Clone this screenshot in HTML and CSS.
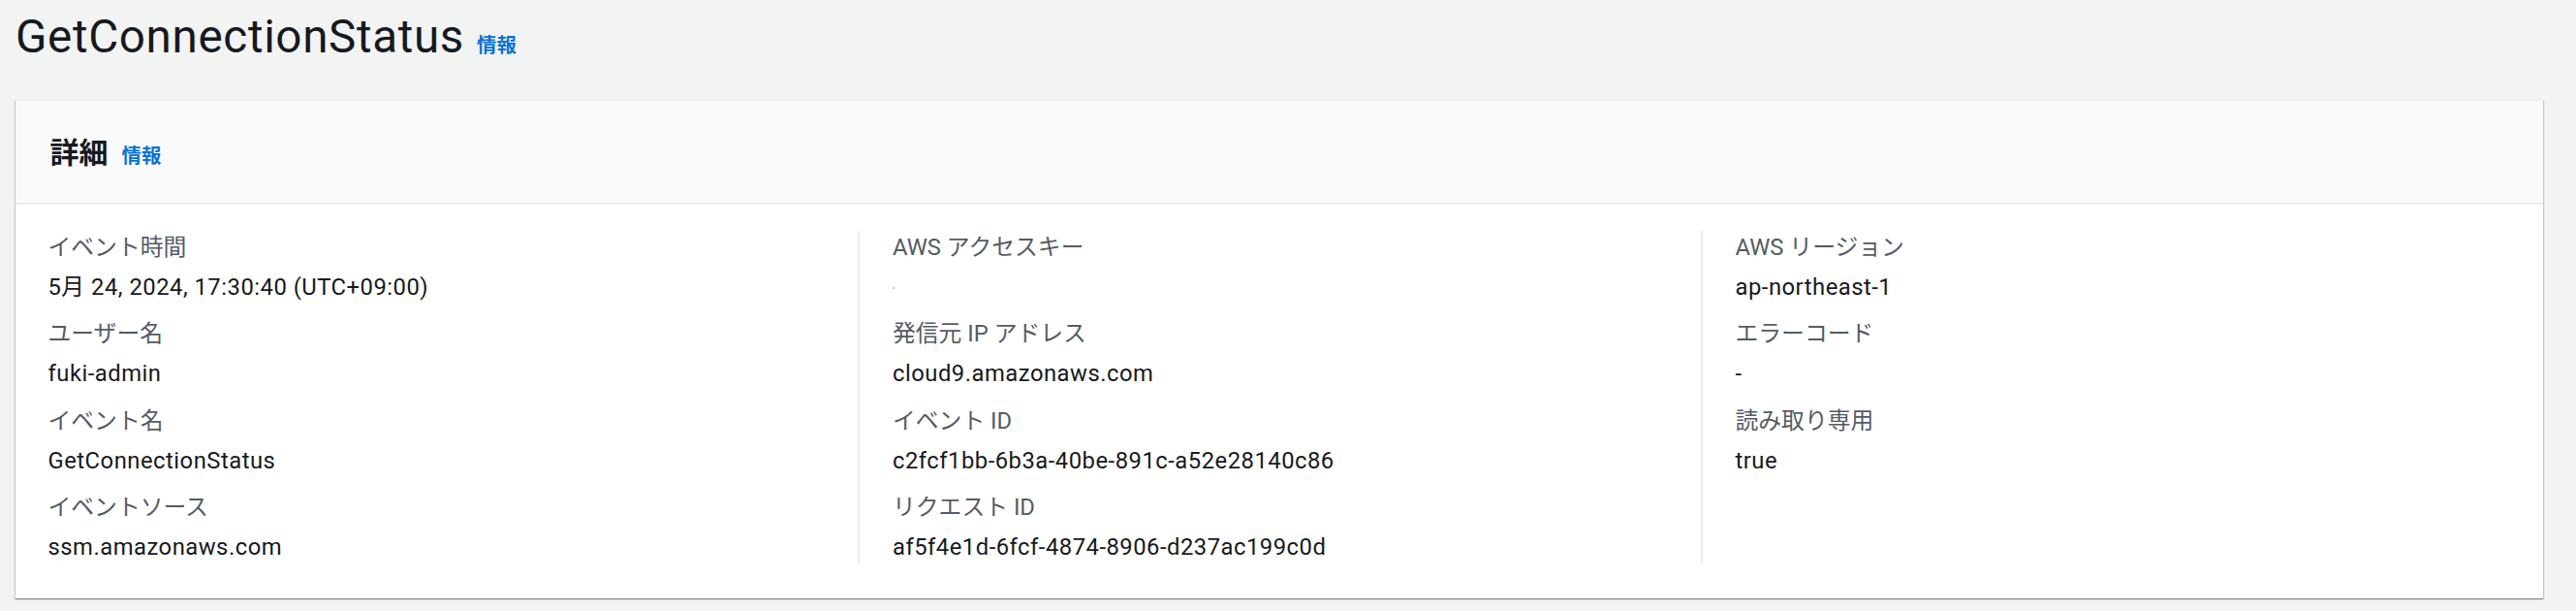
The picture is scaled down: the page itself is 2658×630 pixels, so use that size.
FILE: index.html
```html
<!DOCTYPE html>
<html lang="ja">
<head>
<meta charset="utf-8">
<title>GetConnectionStatus</title>
<link rel="stylesheet" href="styles.css">
</head>
<body>
<header class="page-header">
  <h1 class="page-title">GetConnectionStatus</h1>
  <a class="info-link info-link-title" href="#">情報</a>
</header>
<section class="panel">
  <div class="panel-header">
    <h2 class="panel-title">詳細</h2>
    <a class="info-link info-link-panel" href="#">情報</a>
  </div>
  <div class="panel-body">
    <div class="column">
      <div class="item"><div class="key">イベント時間</div><div class="value">5月 24, 2024, 17:30:40 (UTC+09:00)</div></div>
      <div class="item"><div class="key">ユーザー名</div><div class="value">fuki-admin</div></div>
      <div class="item"><div class="key">イベント名</div><div class="value">GetConnectionStatus</div></div>
      <div class="item"><div class="key">イベントソース</div><div class="value">ssm.amazonaws.com</div></div>
    </div>
    <div class="column">
      <div class="item"><div class="key">AWS アクセスキー</div><div class="value"><span class="redacted"></span></div></div>
      <div class="item"><div class="key">発信元 IP アドレス</div><div class="value">cloud9.amazonaws.com</div></div>
      <div class="item"><div class="key">イベント ID</div><div class="value">c2fcf1bb-6b3a-40be-891c-a52e28140c86</div></div>
      <div class="item"><div class="key">リクエスト ID</div><div class="value">af5f4e1d-6fcf-4874-8906-d237ac199c0d</div></div>
    </div>
    <div class="column">
      <div class="item"><div class="key">AWS リージョン</div><div class="value">ap-northeast-1</div></div>
      <div class="item"><div class="key">エラーコード</div><div class="value">-</div></div>
      <div class="item"><div class="key">読み取り専用</div><div class="value">true</div></div>
    </div>
  </div>
</section>
</body>
</html>
```
FILE: styles.css
```css
html, body {
  margin: 0;
  padding: 0;
}
body {
  background: #f2f3f3;
  font-family: Roboto, "Noto Sans CJK JP", sans-serif;
  color: #16191f;
  width: 2658px;
  height: 630px;
  overflow: hidden;
}
.page-header {
  display: flex;
  align-items: baseline;
  gap: 13px;
  padding: 9px 0 0 16px;
  height: 93px;
  box-sizing: border-box;
}
.page-title {
  margin: 0;
  font-size: 47.6px;
  font-weight: 400;
  line-height: 58px;
  letter-spacing: 0.65px;
  color: #16191f;
}
.info-link {
  color: #0972d3;
  font-weight: 700;
  text-decoration: none;
}
.info-link-title {
  font-size: 20.4px;
}
.panel {
  margin: 9.5px 34px 0 15.5px;
  background: #ffffff;
  box-shadow: 0 1px 1px 0 rgba(0, 28, 36, 0.3), 1px 1px 1px 0 rgba(0, 28, 36, 0.15), -1px 1px 1px 0 rgba(0, 28, 36, 0.15);
  border-top: 1px solid #eaeded;
}
.panel-header {
  display: flex;
  align-items: baseline;
  gap: 14px;
  background: #fafafa;
  border-bottom: 2px solid #eaeded;
  padding: 32px 36px 0;
  height: 107.5px;
  box-sizing: border-box;
}
.panel-title {
  margin: 0;
  font-size: 30px;
  font-weight: 700;
  line-height: 44px;
  color: #16191f;
}
.info-link-panel {
  font-size: 20.4px;
}
.panel-body {
  display: grid;
  grid-template-columns: repeat(3, 1fr);
  padding: 26.5px 0 35.5px;
}
.column {
  display: flex;
  flex-direction: column;
  gap: 14.5px;
  padding: 0 34px;
}
.column + .column {
  border-left: 2px solid #eaeded;
}
.key {
  font-size: 23.8px;
  line-height: 34px;
  color: #545b64;
  margin-bottom: 7px;
}
.value {
  font-size: 23.8px;
  line-height: 34px;
  letter-spacing: 0.5px;
  color: #16191f;
}
.redacted {
  display: inline-block;
  width: 2px;
  height: 2px;
  background: #c8c8c8;
  vertical-align: middle;
}
```
